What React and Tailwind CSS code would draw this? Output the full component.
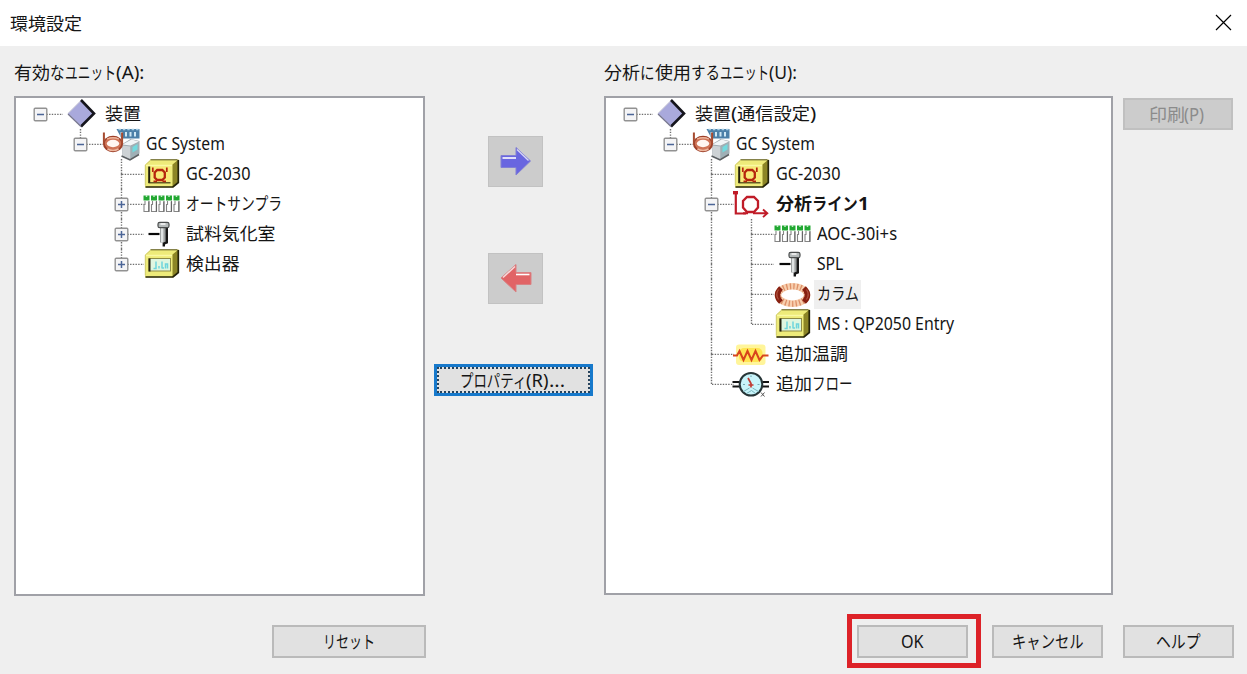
import { useLayoutEffect, useRef, useState } from 'react'
import clsx from 'clsx'

// ── Text run squeezed to a fixed advance, like the narrow kana of MS UI Gothic ──
function Run({ text, w }) {
  const ref = useRef(null)
  const [scale, setScale] = useState(1)
  useLayoutEffect(() => {
    setScale(w / ref.current.offsetWidth)
  }, [w, text])
  return (
    <span className="inline-block whitespace-nowrap" style={{ width: w }}>
      <span ref={ref} className="inline-block origin-left whitespace-pre" style={{ transform: `scaleX(${scale})` }}>
        {text}
      </span>
    </span>
  )
}

function Label({ runs, className }) {
  return (
    <span className={clsx('flex items-baseline leading-none', className)}>
      {runs.map(([text, w]) => <Run key={text} text={text} w={w} />)}
    </span>
  )
}

// ── Tree data ────────────────────────────────────────────────────────────────
// guides: ancestor columns, true where the vertical line continues
const AVAILABLE = [
  { guides: [], box: '-', root: true, icon: <DiamondIcon />, runs: [['装置', 36]] },
  { guides: [false], box: '-', last: true, icon: <SystemIcon />, runs: [['GC System', 79]] },
  { guides: [false, false], icon: <GcIcon />, runs: [['GC-2030', 64]] },
  { guides: [false, false], box: '+', icon: <SamplerIcon />, runs: [['オートサンプラ', 96]] },
  { guides: [false, false], box: '+', icon: <InjectorIcon />, runs: [['試料気化室', 90]] },
  { guides: [false, false], box: '+', last: true, icon: <DetectorIcon />, runs: [['検出器', 54]] },
]

const IN_USE = [
  { guides: [], box: '-', root: true, icon: <DiamondIcon />, runs: [['装置', 36], ['(', 6], ['通信設定', 73], [')', 6]] },
  { guides: [false], box: '-', last: true, icon: <SystemIcon />, runs: [['GC System', 79]] },
  { guides: [false, false], icon: <GcIcon />, runs: [['GC-2030', 64]] },
  { guides: [false, false], box: '-', icon: <LineIcon />, bold: true, runs: [['分析', 36], ['ライン', 46], ['1', 11]] },
  { guides: [false, false, true], icon: <SamplerIcon />, runs: [['AOC-30i+s', 80]] },
  { guides: [false, false, true], icon: <InjectorIcon />, runs: [['SPL', 26]] },
  { guides: [false, false, true], icon: <ColumnIcon />, selected: true, runs: [['カラム', 42]] },
  { guides: [false, false, true], last: true, icon: <DetectorIcon />, runs: [['MS : QP2050 Entry', 137]] },
  { guides: [false, false], icon: <HeaterIcon />, runs: [['追加温調', 72]] },
  { guides: [false, false], last: true, icon: <FlowIcon />, runs: [['追加', 36], ['フロー', 41]] },
]

function Connector({ up, down, across, box }) {
  return (
    <svg width="40.4" height="30" viewBox="0 0 40.4 30" className="block shrink-0 overflow-visible" fill="none">
      <g stroke="#6f6f6f" strokeWidth="1.4" strokeDasharray="1.4 1.3">
        {up && <path d="M20.5 0V15" />}
        {down && <path d="M20.5 15V30" />}
        {across && <path d="M21 15.4H43" />}
      </g>
      {box && (
        <>
          <rect x="14.2" y="9.2" width="12.6" height="12.6" rx="1" fill="#f4f4f6" stroke="#929292" strokeWidth="1.4" />
          <path d={box === '+' ? 'M17 15.5H24M20.5 12V19' : 'M17 15.5H24'} stroke="#4b6597" strokeWidth="1.5" />
        </>
      )}
    </svg>
  )
}

function TreeRow({ item }) {
  return (
    <div className="flex h-[30px] items-center">
      {item.guides.map((on, i) => <Connector key={i} up={on} down={on} />)}
      <Connector up={!item.root} down={!item.root && !item.last} across box={item.box} />
      <svg width="40" height="30" viewBox="-0.5 0.5 40 30" className="block shrink-0 overflow-visible" fill="none">
        {item.icon}
      </svg>
      <Label
        runs={item.runs}
        className={clsx(
          'ml-[2px] h-[29px] items-center pl-[3px] pr-[2px]',
          item.bold && 'font-bold',
          item.selected && 'bg-[#efefef]',
        )}
      />
    </div>
  )
}

function Tree({ items, className }) {
  return (
    <div className={clsx('border-2 border-[#a0a1a7] bg-white pl-[4px] pt-px', className)}>
      {items.map((item, i) => <TreeRow key={i} item={item} />)}
    </div>
  )
}

function Button({ runs, className }) {
  return (
    <button className={clsx('flex items-center justify-center border-2 border-[#bababa] bg-[#e1e1e1] pt-[2px]', className)}>
      <Label runs={runs} />
    </button>
  )
}

export default function App() {
  return (
    <div className="flex h-[674px] w-[1247px] flex-col overflow-hidden bg-[#efefef] font-['Noto_Sans','Noto_Sans_CJK_JP',sans-serif] text-[17.5px] text-[#151515]">
      {/* Title bar */}
      <header className="flex h-[46px] shrink-0 items-center justify-between bg-white pl-[10px] pr-[15px]">
        <Label runs={[['環境設定', 72]]} className="pt-px" />
        <svg width="17" height="17" viewBox="0 0 17 17" stroke="#000" strokeWidth="1.2" className="mb-[2px]">
          <path d="M1 1L16 16M16 1L1 16" />
        </svg>
      </header>

      <main className="flex pl-[14px]">
        <section className="w-[411px]">
          <div className="flex h-[50px] items-center pt-[4px]">
            <Label runs={[['有効', 36], ['な', 15], ['ユニット', 51], ['(A):', 28]]} />
          </div>
          <Tree items={AVAILABLE} className="h-[500px]" />
        </section>

        {/* Transfer buttons */}
        <section className="flex w-[179px] flex-col items-center pt-[90px]">
          <button className="ml-[2px] flex h-[51px] w-[55px] items-center justify-center border border-[#c2c2c2] bg-[#cccccc] pb-[2px]">
            <svg width="33" height="32" viewBox="0 0 33 32" fill="none">
              <path d="M2 10.5H17V2.5L31.5 16L17 30V22.5H2Z" fill="#6966e0" stroke="#8280d4" />
              <path d="M3.5 13H17" stroke="#fff" strokeWidth="1.6" />
              <path d="M18 4.5L29.5 15.5" stroke="#d9d8f5" strokeWidth="1.3" />
            </svg>
          </button>
          <button className="ml-[2px] mt-[66px] flex h-[51px] w-[55px] items-center justify-center border border-[#c2c2c2] bg-[#cccccc] pb-[2px]">
            <svg width="33" height="32" viewBox="0 0 33 32" fill="none">
              <path d="M32 10.5H17V2.5L2 16L17 30V22.5H32Z" fill="#e16466" stroke="#d88284" />
              <path d="M17 12.5H30.5" stroke="#fff" strokeWidth="1.6" />
              <path d="M16 4.5L4 15.5" stroke="#f6dada" strokeWidth="1.5" />
            </svg>
          </button>
          <button className="mr-[2px] mt-[60px] h-8 w-[159px] border-3 border-[#1779cb] bg-[#e1e1e1]">
            <span className="flex h-full items-center justify-center border-2 border-dotted border-[#27435c] pr-[3px] pt-px">
              <Label runs={[['プロパティ', 66], ['(R)', 22], ['...', 16]]} />
            </span>
          </button>
        </section>

        <section className="w-[509px]">
          <div className="flex h-[50px] items-center pt-[4px]">
            <Label runs={[['分析', 36], ['に', 15], ['使用', 36], ['する', 29], ['ユニット', 49], ['(U):', 28]]} />
          </div>
          <Tree items={IN_USE} className="h-[499px]" />
        </section>

        <button className="ml-[10px] mt-[52px] flex h-8 w-[110px] items-center justify-center border-2 border-[#c0c0c0] bg-[#cccccc] pr-[4px] pt-px text-[#8b8b8b]">
          <Label runs={[['印刷', 36], ['(P)', 20]]} />
        </button>
      </main>

      <footer className="mt-[18px] flex h-[54px] items-center pl-[272px]">
        <Button runs={[['リセット', 52]]} className="h-[33px] w-[154px]" />
        <div className="ml-[421px] flex h-[54px] w-[134px] items-center justify-center border-5 border-[#dd2228] pr-[3px]">
          <Button runs={[['OK', 23]]} className="h-[33px] w-[111px]" />
        </div>
        <Button runs={[['キャンセル', 72]]} className="ml-[11px] h-[33px] w-[111px]" />
        <Button runs={[['ヘルプ', 45]]} className="ml-[20px] h-[33px] w-[111px]" />
      </footer>
    </div>
  )
}

// ── Tree icons, drawn on a 40x30 cell ────────────────────────────────────────
function DiamondIcon() {
  return (
    <g>
      <path d="M21 1.5L34 15L21 28L7.5 15Z" fill="#a9a9dc" />
      <path d="M7.5 15L20.5 2" stroke="#c4c4d4" strokeWidth="1" />
      <path d="M20.5 1.5L33.5 15L20.5 28" stroke="#15151c" strokeWidth="2.6" />
      <path d="M7.5 15.5L20.5 28" stroke="#77778f" strokeWidth="1.3" />
    </g>
  )
}

function SystemIcon() {
  return (
    <g>
      <path d="M15 0.5H38V10H20Z" fill="#4c80a8" />
      <path d="M17 1H37" stroke="#a8cfe6" strokeWidth="1.4" strokeDasharray="2.4 2" />
      <path d="M20 3.5V8M24.5 3.5V8M29 3.5V8M33.5 3.5V8" stroke="#cfe7f4" strokeWidth="2" />
      <path d="M20 16L29 10.5L38 12.5V25L29 31.5L21 28Z" fill="#a2abb0" />
      <path d="M21 16L30 11L37.5 13L29 17Z" fill="#f1f4f6" />
      <path d="M20.5 17L29 18V30.5L21 27.5Z" fill="#cdd2d5" />
      <path d="M29 18L37.5 13.5V24.5L29 30Z" fill="#9fb0b6" />
      <path d="M31 18.5L36 15.5V21L31 24Z" fill="#72dade" />
      <path d="M20 27.5L28.5 31.5L37.5 26" stroke="#5b5f62" strokeWidth="1.5" />
      <ellipse cx="11.5" cy="15.5" rx="10" ry="8.3" fill="#9d3f28" />
      <ellipse cx="11.5" cy="15" rx="8.2" ry="6.6" fill="#cf7356" />
      <path d="M6 20.5Q11.5 23.5 17 20.5" stroke="#edb79f" strokeWidth="1.6" />
      <path d="M5.5 10.5Q11.5 8 17.5 10.5" stroke="#edb79f" strokeWidth="1.3" />
      <ellipse cx="11.5" cy="15" rx="6.2" ry="3.7" fill="#fff6f1" />
      <path d="M2.4 4V16M20.6 4V16" stroke="#a64b30" strokeWidth="2" />
    </g>
  )
}

// yellow instrument case shared by the GC and detector icons
function YellowCase() {
  return (
    <g>
      <path d="M3.5 6.5L9 1H37V24L31.5 29H3.5Z" fill="#eeeb7a" />
      <path d="M31 6L37 1V24L31 29Z" fill="#8c8526" />
      <path d="M4 28.5H31.5L36.8 24V1.5" stroke="#26240a" strokeWidth="1.7" />
      <path d="M9 1.3H36" stroke="#56521b" strokeWidth="1" />
      <path d="M3.8 27V6.5L9 2" stroke="#cfcb70" strokeWidth="1" />
      <path d="M4.5 7H30.5" stroke="#fbf9a5" strokeWidth="1.4" />
    </g>
  )
}

function GcIcon() {
  return (
    <g>
      <YellowCase />
      <rect x="8" y="8.5" width="20.5" height="15.5" fill="#f8e978" />
      <path d="M7.7 8V24.5" stroke="#211e09" strokeWidth="2" />
      <path d="M7 24.3H29" stroke="#3f3a12" strokeWidth="1.2" />
      <path d="M15.7 11.5H20.8L23.3 14V19L20.8 21.5H15.7L13.2 19V14Z" stroke="#b5250d" strokeWidth="2.3" />
      <path d="M11.3 9V13.5M25.3 9V13.5M12 22.8H15.5M21 22.8H24.5" stroke="#b5250d" strokeWidth="1.7" />
    </g>
  )
}

function DetectorIcon() {
  return (
    <g>
      <YellowCase />
      <rect x="7.5" y="10" width="21.5" height="12.5" fill="#e0f6e0" stroke="#8f8b45" strokeWidth="1" />
      <path d="M8 10V23" stroke="#25230e" strokeWidth="2" />
      <path d="M12 20H14.5V13M17.5 20V17.5M20.5 20V13M20.5 19.5H22.5M24 20V15.5H26V20" stroke="#6fd5dc" strokeWidth="1.5" />
    </g>
  )
}

function SamplerIcon() {
  return (
    <g>
      {[2, 9.5, 17, 24.5, 32].map((x) => (
        <g key={x}>
          <path d={`M${x} 7H${x + 6}V12H${x}Z`} fill="#22a832" />
          <path d={`M${x + 3} 6.5V8.5`} stroke="#c8edcb" strokeWidth="1.5" />
          <path d={`M${x + 1.5} 12.5V16H${x + 0.5}V23H${x + 5.5}V12.5`} fill="#fff" stroke="#858585" strokeWidth="1.1" />
          <path d={`M${x + 5.3} 13V23`} stroke="#5a5a5a" strokeWidth="0.9" />
        </g>
      ))}
    </g>
  )
}

function InjectorIcon() {
  return (
    <g>
      <path d="M7 15.5H18" stroke="#080808" strokeWidth="2.2" />
      <path d="M18.5 9H25.5V24H18.5Z" fill="#9da1a1" />
      <path d="M20.7 9V23.5" stroke="#e0e4e4" strokeWidth="2.4" />
      <path d="M25.3 8.5V24L22.3 25V28" stroke="#161616" strokeWidth="2.4" />
      <rect x="16.5" y="3.8" width="11" height="5.4" rx="1.8" fill="#b5baba" stroke="#4b4e4e" strokeWidth="1.2" />
      <path d="M19 5.5H24" stroke="#fff" strokeWidth="1.4" />
    </g>
  )
}

function LineIcon() {
  return (
    <g stroke="#c01c28">
      <path d="M4.3 3V25H14.5" strokeWidth="2.2" />
      <path d="M1.5 4.2H6.5" strokeWidth="3.4" />
      <path d="M15.5 8.5H22.5L26.5 12.5V19L22.5 23.5H15.5L11.5 19V12.5Z" strokeWidth="2.3" />
      <path d="M11.5 24.8H16.5M21.5 24.8H35.5M31.5 21L35.8 24.8L31.5 28.6" strokeWidth="1.9" />
    </g>
  )
}

function ColumnIcon() {
  return (
    <g>
      <ellipse cx="20" cy="16.5" rx="14.5" ry="8.7" stroke="#f8cfae" strokeWidth="6.5" />
      <ellipse cx="20" cy="16.5" rx="14.5" ry="8.7" stroke="#dd9068" strokeWidth="6" strokeDasharray="1.3 2.2" />
      <path d="M8.5 9.5Q1.5 16.5 8.5 23.5M31.5 9.5Q38.5 16.5 31.5 23.5" stroke="#872011" strokeWidth="5.2" />
      <path d="M6 11Q2.5 16 6 21M34 11Q37.5 16 34 21" stroke="#b0523e" strokeWidth="1.2" />
    </g>
  )
}

function HeaterIcon() {
  return (
    <g>
      <rect x="4.5" y="6" width="29.5" height="20.5" rx="3" fill="#fff59a" />
      <rect x="7.5" y="9.5" width="23.5" height="14" rx="5" fill="#ffe552" />
      <path d="M1.5 17H5.5L8 12.5L12 21.5L16 12.5L20 21.5L24 12.5L28 21.5L31.5 17H37" stroke="#d8451c" strokeWidth="2" />
    </g>
  )
}

function FlowIcon() {
  return (
    <g>
      <path d="M1 13.5H8M1 18H8M31 13.5H37.5M31 18H37.5" stroke="#151515" strokeWidth="2.2" />
      <circle cx="19.5" cy="15.8" r="11.3" fill="#c8f4fa" stroke="#273537" strokeWidth="2" />
      <path d="M16.5 9.5L19.5 15V19M17 16.5H22" stroke="#c03a32" strokeWidth="1.7" />
      <path d="M12 23L18 19.5M21 19.5L27 23M15 25L20 22L24 25" stroke="#78b5bc" strokeWidth="1" />
      <path d="M11.5 16H13.5M19.5 7V8.5M26 16H28" stroke="#75a9b3" strokeWidth="1.2" />
      <path d="M29.5 24L33 28M33 24L29.5 28" stroke="#555" strokeWidth="1" />
    </g>
  )
}
